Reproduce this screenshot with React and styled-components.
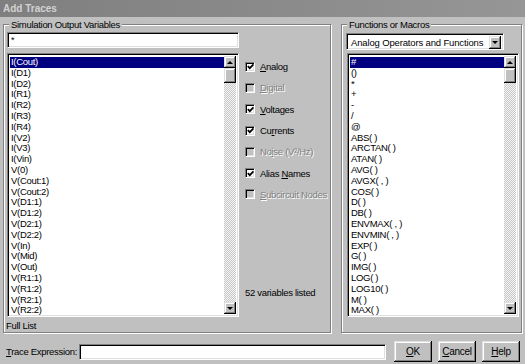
import React from 'react';
import styled, { createGlobalStyle } from 'styled-components';

const Global = createGlobalStyle`
  html, body { margin: 0; padding: 0; background: #c0c0c0; overflow: hidden; }
  body { font-family: "Liberation Sans", Arial, sans-serif; }
`;

const uiFont = `
  font-family: "Liberation Sans", Arial, sans-serif;
  font-size: 9.5px;
  letter-spacing: -0.3px;
`;

const sunken = `
  background: #fff;
  border: 1px solid;
  border-color: #808080 #fff #fff #808080;
  box-shadow: inset 1px 1px 0 #000, inset -1px -1px 0 #dfdfdf;
  box-sizing: border-box;
`;

const raised = `
  background: #c0c0c0;
  box-shadow: inset -1px -1px 0 #000, inset 1px 1px 0 #dfdfdf, inset -2px -2px 0 #808080, inset 2px 2px 0 #fff;
  box-sizing: border-box;
`;

const Window = styled.div`
  width: 525px;
  height: 364px;
  background: #c0c0c0;
  display: flex;
  flex-direction: column;
  color: #000;
  overflow: hidden;
  ${uiFont}
`;

const TitleBar = styled.div`
  height: 17px;
  flex: none;
  background: linear-gradient(90deg, #7f7f7f 0%, #8c8c8c 60%, #969696 100%);
  color: #d2d2d2;
  font-weight: bold;
  font-size: 10px;
  letter-spacing: 0;
  padding-left: 3px;
  display: flex;
  align-items: center;
`;

const Main = styled.div`
  display: flex;
  gap: 10px;
  padding: 7px 3px 0 3px;
  flex: none;
`;

const GroupBox = styled.div`
  position: relative;
  width: ${p => p.$w}px;
  height: 309px;
  box-sizing: border-box;
  border: 1px solid #808080;
  box-shadow: 1px 1px 0 #fff, inset 1px 1px 0 #fff;
  display: flex;
  flex-direction: column;
  padding: ${p => p.$pad};
`;

const GroupLabel = styled.div`
  position: absolute;
  top: -6px;
  left: 5px;
  padding: 0 2px;
  line-height: 11px;
  background: #c0c0c0;
  white-space: nowrap;
`;

const TextField = styled.div`
  ${sunken}
  width: ${p => (p.$w ? `${p.$w}px` : 'auto')};
  flex: ${p => (p.$w ? 'none' : '1')};
  height: 16px;
  padding: 0 0 0 3px;
  line-height: 14px;
  font-size: 9px;
`;

const ContentRow = styled.div`
  display: flex;
  margin-top: 5px;
  height: 264px;
`;

const ListBox = styled.div`
  ${sunken}
  width: ${p => p.$w}px;
  height: 264px;
  flex: none;
  display: flex;
  padding: 2px;
  margin-left: ${p => p.$ml || 0}px;
  margin-top: ${p => p.$mt || 0}px;
  overflow: hidden;
`;

const Items = styled.div`
  flex: 1;
  min-width: 0;
  padding-top: 1px;
`;

const Item = styled.div`
  height: 10.8px;
  line-height: 10.8px;
  padding-left: 1px;
  white-space: nowrap;
  background: ${p => (p.$sel ? '#000080' : 'transparent')};
  color: ${p => (p.$sel ? '#fff' : '#000')};
`;

const ScrollBar = styled.div`
  width: 12px;
  flex: none;
  display: flex;
  flex-direction: column;
  background: repeating-conic-gradient(#c8c8c8 0 25%, #f4f4f4 0 50%) 0 0 / 2px 2px;
`;

const ScrollButton = styled.div`
  ${raised}
  height: 12px;
  flex: none;
  display: flex;
  align-items: center;
  justify-content: center;
`;

const Thumb = styled.div`
  ${raised}
  height: 15px;
  flex: none;
`;

const Track = styled.div`
  flex: 1;
`;

const Arrow = styled.span`
  width: 0;
  height: 0;
  border-left: 3px solid transparent;
  border-right: 3px solid transparent;
  ${p => (p.$dir === 'up' ? 'border-bottom: 3px solid #000;' : 'border-top: 3px solid #000;')}
`;

const Options = styled.div`
  flex: 1;
  margin-left: 6px;
  display: flex;
  flex-direction: column;
  padding: 3px 0 19px 0;
`;

const OptionRow = styled.div`
  height: 21.3px;
  display: flex;
  align-items: center;
  gap: 5px;
  white-space: nowrap;
  color: ${p => (p.$disabled ? '#808080' : '#000')};
  text-shadow: ${p => (p.$disabled ? '1px 1px 0 #fff' : 'none')};
`;

const CheckBox = styled.span`
  width: 10px;
  height: 10px;
  flex: none;
  box-sizing: border-box;
  border: 1px solid;
  border-color: #808080 #fff #fff #808080;
  box-shadow: inset 1px 1px 0 #000, inset -1px -1px 0 #dfdfdf;
  background: ${p => (p.$disabled ? '#c0c0c0' : '#fff')};
  display: flex;
  align-items: center;
  justify-content: center;
  text-shadow: none;
`;

const Count = styled.div`
  margin-top: auto;
  line-height: 11px;
  white-space: nowrap;
`;

const GroupFooter = styled.div`
  margin-top: 3px;
  margin-left: -1px;
  line-height: 11px;
`;

const Combo = styled.div`
  ${sunken}
  width: 158px;
  height: 17px;
  display: flex;
  padding: 2px;
`;

const ComboText = styled.div`
  flex: 1;
  padding-left: 2px;
  line-height: 13px;
  letter-spacing: -0.15px;
  white-space: nowrap;
`;

const DropButton = styled.div`
  ${raised}
  width: 12px;
  height: 13px;
  display: flex;
  align-items: center;
  justify-content: center;
`;

const BottomBar = styled.div`
  display: flex;
  align-items: center;
  margin-top: 8px;
  height: 21px;
  padding: 0 5px 0 6px;
`;

const BottomLabel = styled.div`
  margin-right: 2px;
  white-space: nowrap;
`;

const Buttons = styled.div`
  display: flex;
  gap: 6px;
  margin-left: 8px;
`;

const Button = styled.div`
  ${raised}
  width: 38px;
  height: 21px;
  display: flex;
  align-items: center;
  justify-content: center;
  font-size: 10px;
`;

const Check = () => (
  <svg width="7" height="7" viewBox="0 0 7 7">
    <path d="M0.8 3.2 L2.8 5.2 L6.4 1.4" stroke="#000" strokeWidth="1.7" fill="none" />
  </svg>
);

const variables = [
  'I(Cout)', 'I(D1)', 'I(D2)', 'I(R1)', 'I(R2)', 'I(R3)', 'I(R4)', 'I(V2)', 'I(V3)', 'I(Vin)',
  'V(0)', 'V(Cout:1)', 'V(Cout:2)', 'V(D1:1)', 'V(D1:2)', 'V(D2:1)', 'V(D2:2)', 'V(In)',
  'V(Mid)', 'V(Out)', 'V(R1:1)', 'V(R1:2)', 'V(R2:1)', 'V(R2:2)',
];

const functions = [
  '#', '()', '*', '+', '-', '/', '@', 'ABS( )', 'ARCTAN( )', 'ATAN( )', 'AVG( )', 'AVGX( , )',
  'COS( )', 'D( )', 'DB( )', 'ENVMAX( , )', 'ENVMIN( , )', 'EXP( )', 'G( )', 'IMG( )', 'LOG( )',
  'LOG10( )', 'M( )', 'MAX( )',
];

const options = [
  { pre: '', acc: 'A', post: 'nalog', checked: true },
  { pre: '', acc: 'D', post: 'igital', disabled: true },
  { pre: '', acc: 'V', post: 'oltages', checked: true },
  { pre: 'Cu', acc: 'r', post: 'rents', checked: true },
  { pre: 'No', acc: 'i', post: 'se (V²/Hz)', disabled: true },
  { pre: 'Alias ', acc: 'N', post: 'ames', checked: true },
  { pre: '', acc: 'S', post: 'ubcircuit Nodes', disabled: true },
];

const List = ({ items, width, ml, mt }) => (
  <ListBox $w={width} $ml={ml} $mt={mt}>
    <Items>
      {items.map((t, i) => (
        <Item key={t} $sel={i === 0}>{t}</Item>
      ))}
    </Items>
    <ScrollBar>
      <ScrollButton><Arrow $dir="up" /></ScrollButton>
      <Thumb />
      <Track />
      <ScrollButton><Arrow $dir="down" /></ScrollButton>
    </ScrollBar>
  </ListBox>
);

export default function App() {
  return (
    <>
      <Global />
      <Window>
        <TitleBar>Add Traces</TitleBar>
        <Main>
          <GroupBox $w={328} $pad="7px 0 0 3px">
            <GroupLabel>Simulation Output Variables</GroupLabel>
            <TextField $w={232}>*</TextField>
            <ContentRow>
              <List items={variables} width={232} />
              <Options>
                {options.map(o => (
                  <OptionRow key={o.acc + o.post} $disabled={o.disabled}>
                    <CheckBox $disabled={o.disabled}>{o.checked && <Check />}</CheckBox>
                    <span>{o.pre}<u>{o.acc}</u>{o.post}</span>
                  </OptionRow>
                ))}
                <Count>52 variables listed</Count>
              </Options>
            </ContentRow>
            <GroupFooter>Full List</GroupFooter>
          </GroupBox>
          <GroupBox $w={181} $pad="8px 0 0 4px">
            <GroupLabel>Functions or Macros</GroupLabel>
            <Combo>
              <ComboText>Analog Operators and Functions</ComboText>
              <DropButton><Arrow $dir="down" /></DropButton>
            </Combo>
            <List items={functions} width={172} ml={1} mt={3} />
          </GroupBox>
        </Main>
        <BottomBar>
          <BottomLabel><u>T</u>race Expression:</BottomLabel>
          <TextField />
          <Buttons>
            <Button><span><u>O</u>K</span></Button>
            <Button><span><u>C</u>ancel</span></Button>
            <Button><span><u>H</u>elp</span></Button>
          </Buttons>
        </BottomBar>
      </Window>
    </>
  );
}
